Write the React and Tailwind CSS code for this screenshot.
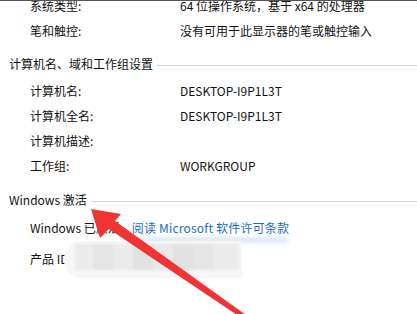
const font = { fontFamily: '"Noto Sans CJK SC", "Microsoft YaHei", sans-serif' };

const Row = ({ label, value }) => (
  <div className="flex h-[25px] items-center pl-[30px]">
    <span className="w-[150px] shrink-0">{label}</span>
    <span>{value}</span>
  </div>
);

const Heading = ({ children, className = "" }) => (
  <div className={`flex items-center pl-[9px] ${className}`}>
    <span className="shrink-0">{children}</span>
    <span className="ml-[4px] mt-[4px] h-px flex-1 bg-[#d9d9d9]" />
  </div>
);

const Arrow = () => (
  <svg className="pointer-events-none absolute left-0 top-0" width="417" height="314" viewBox="0 0 417 314">
    <polygon
      points="91,208 121,213 115,220 246,314 237,314 109,228 100,237"
      fill="#f03434"
    />
  </svg>
);

const Smudge = () => (
  <div className="pointer-events-none absolute left-0 top-0 h-[314px] w-[417px]">
    <div className="absolute left-[140px] top-[236px] h-[6px] w-[148px] rounded-full bg-[#dbe8f5] blur-[2px]" />
    <div className="absolute left-[64px] top-[240px] h-[37px] w-[178px] rounded-l-[18px] bg-[#f6f6f6]" />
    <div className="absolute left-[75px] top-[243px] flex h-[26px] w-[164px] blur-[1px]">
      <div className="w-[18px] bg-[#ececec]" />
      <div className="w-[20px] bg-[#e4e4e4]" />
      <div className="w-[20px] bg-[#ebebeb]" />
      <div className="w-[20px] bg-[#e2e2e2]" />
      <div className="w-[20px] bg-[#e9e9e9]" />
      <div className="w-[20px] bg-[#e1e1e1]" />
      <div className="w-[20px] bg-[#e6e6e6]" />
      <div className="w-[26px] bg-[#ececec]" />
    </div>
  </div>
);

export default function App() {
  return (
    <div className="relative h-[314px] w-[417px] overflow-hidden border-t border-[#555] bg-white text-[12px] text-[#111]" style={font}>
      <div className="-mt-[8px]">
        <Row label="系统类型:" value="64 位操作系统，基于 x64 的处理器" />
        <Row label="笔和触控:" value="没有可用于此显示器的笔或触控输入" />
        <Heading className="mt-[8px] h-[25px]">计算机名、域和工作组设置</Heading>
        <div className="mt-[2px]">
          <Row label="计算机名:" value="DESKTOP-I9P1L3T" />
          <Row label="计算机全名:" value="DESKTOP-I9P1L3T" />
          <Row label="计算机描述:" value="" />
          <Row label="工作组:" value="WORKGROUP" />
        </div>
        <Heading className="mt-[9px] h-[25px]">Windows 激活</Heading>
        <div className="mt-[3px] flex h-[25px] items-center pl-[30px]">
          <span>Windows 已激活</span>
          <a className="ml-[12px] tracking-[0.2px] text-[#1a6cc6]">阅读 Microsoft 软件许可条款</a>
        </div>
        <div className="mt-[6px] flex h-[25px] items-center pl-[30px]">
          <span>产品 ID:</span>
        </div>
      </div>
      <Smudge />
      <Arrow />
    </div>
  );
}
